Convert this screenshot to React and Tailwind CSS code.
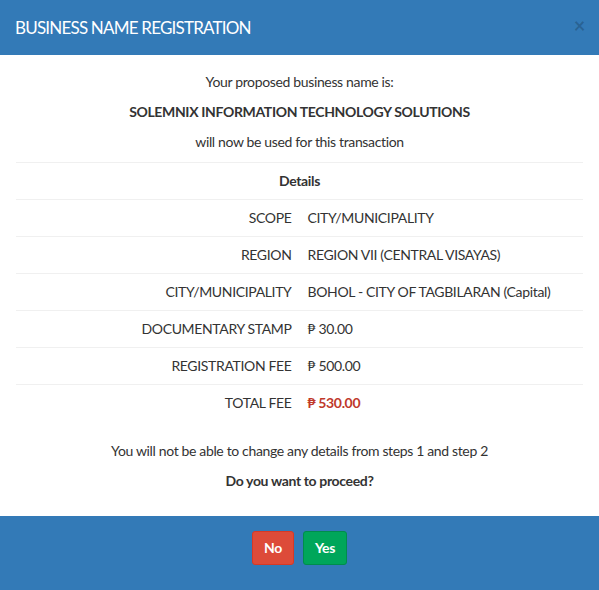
import React from 'react';

const rows = [
  { label: 'SCOPE', value: 'CITY/MUNICIPALITY' },
  { label: 'REGION', value: 'REGION VII (CENTRAL VISAYAS)' },
  { label: 'CITY/MUNICIPALITY', value: 'BOHOL - CITY OF TAGBILARAN (Capital)' },
  { label: 'DOCUMENTARY STAMP', value: '₱ 30.00' },
  { label: 'REGISTRATION FEE', value: '₱ 500.00' },
];

export default function App() {
  return (
    <div className="w-[599px] h-[590px] flex flex-col bg-white text-[14px] leading-[20px] tracking-[-0.35px] text-[#333]" style={{ fontFamily: 'Lato, "Noto Sans", sans-serif' }}>
      {/* Header */}
      <div className="h-[55px] shrink-0 bg-[#337ab7] flex items-center justify-between pl-[15px] pr-[14px]">
        <h4 className="text-[17px] tracking-[-0.8px] text-white leading-none">BUSINESS NAME REGISTRATION</h4>
        <span className="text-[20px] font-bold text-black/20 leading-none -mt-[6px]">×</span>
      </div>

      {/* Body */}
      <div className="px-[16px] pt-[17px] pb-[15px] text-center">
        <p className="mb-[10px]">Your proposed business name is:</p>
        <p className="mb-[10px] font-bold">SOLEMNIX INFORMATION TECHNOLOGY SOLUTIONS</p>
        <p className="mb-[10px]">will now be used for this transaction</p>

        <table className="w-full mb-[20px] border-collapse">
          <tbody>
            <tr className="border-t border-[#f0f0f0]">
              <td colSpan={2} className="p-[8px] font-bold text-center">Details</td>
            </tr>
            {rows.map((r) => (
              <tr key={r.label} className="border-t border-[#f0f0f0]">
                <td className="w-1/2 p-[8px] text-right">{r.label}</td>
                <td className="w-1/2 p-[8px] text-left">{r.value}</td>
              </tr>
            ))}
            <tr className="border-t border-[#f0f0f0]">
              <td className="w-1/2 p-[8px] text-right">TOTAL FEE</td>
              <td className="w-1/2 p-[8px] text-left font-bold text-[#c0392b]">₱ 530.00</td>
            </tr>
          </tbody>
        </table>

        <p className="mb-[10px]">You will not be able to change any details from steps 1 and step 2</p>
        <p className="mb-[10px] font-bold">Do you want to proceed?</p>
      </div>

      {/* Footer */}
      <div className="flex-1 bg-[#337ab7] flex justify-center items-start pt-[15px] gap-[9px]">
        <button className="h-[34px] px-[11px] rounded-[3px] bg-[#dd4b39] border border-[#d73925] text-white font-bold">No</button>
        <button className="h-[34px] px-[11px] rounded-[3px] bg-[#00a65a] border border-[#008d4c] text-white font-bold">Yes</button>
      </div>
    </div>
  );
}
